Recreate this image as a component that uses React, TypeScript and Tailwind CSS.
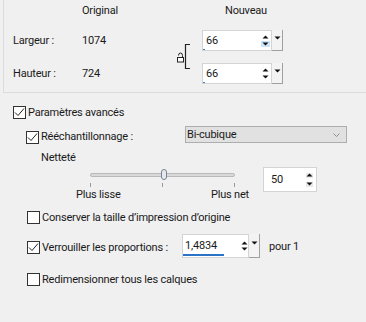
import React from "react";

function Check({ checked }: { checked: boolean }) {
  return (
    <div className="w-[13px] h-[13px] shrink-0 bg-white border border-[#333333] flex items-center justify-center">
      {checked && (
        <svg width="11" height="11" viewBox="0 0 11 11">
          <path d="M1 5.5 L4 8.5 L10 1.5" fill="none" stroke="#222" strokeWidth="1" />
        </svg>
      )}
    </div>
  );
}

function UpTri() {
  return (
    <svg width="7" height="4" viewBox="0 0 7 4">
      <path d="M0.5 3.5 L3.5 0.5 L6.5 3.5 Z" fill="#111" />
    </svg>
  );
}
function DownTri() {
  return (
    <svg width="7" height="4" viewBox="0 0 7 4">
      <path d="M0.5 0.5 L3.5 3.5 L6.5 0.5 Z" fill="#111" />
    </svg>
  );
}

function Spin({ value, hover }: { value: string; hover?: boolean }) {
  return (
    <div className="flex h-[21px] w-[81px]">
      <div className="relative flex flex-1 items-center bg-white border border-[#d4d4d4]">
        <span className="pl-[3px]">{value}</span>
        <div className="ml-auto mr-[1px] flex w-[9px] flex-col items-center gap-[1px]">
          <div className="flex h-[6px] w-[9px] items-center justify-center">
            <UpTri />
          </div>
          <div className={"flex h-[6px] w-[9px] items-center justify-center " + (hover ? "bg-[#cce4f7]" : "")}>
            <DownTri />
          </div>
        </div>
        <div className="absolute bottom-0 left-0 h-[1px] w-[2px] bg-[#3c7fd4]" />
      </div>
      <div className="flex w-[11px] justify-center bg-[#f3f3f3] border-r border-b border-[#a0a0a0] pt-[6px]">
        <DownTri />
      </div>
    </div>
  );
}

export default function App() {
  return (
    <div className="w-[366px] h-[322px] overflow-hidden whitespace-nowrap bg-[#f0f0f0] text-[11px] tracking-[-0.2px] leading-[16px] text-[#1a1a1a] font-['Roboto',sans-serif]">
      {/* Top box */}
      <div className="ml-[3px] h-[93px] border-l border-b border-[#dcdcdc]">
        <div className="flex pt-[3px]">
          <span className="ml-[78px] w-[143px]">Original</span>
          <span>Nouveau</span>
        </div>
        <div className="mt-[11px] grid grid-cols-[78px_95px_25px_81px] grid-rows-[21px_21px] gap-y-[12px]">
          <span className="pl-[9px] self-center">Largeur :</span>
          <span className="self-center">1074</span>
          <div className="row-span-2">
            <svg width="25" height="54" viewBox="0 0 25 54">
              <path d="M1.5 25.5 a2 2.5 0 0 1 4 0 v1.5" fill="none" stroke="#222" strokeWidth="1" />
              <rect x="0.5" y="27.5" width="6" height="4.5" fill="#fff" stroke="#222" strokeWidth="1" />
              <path d="M13 14.5 H8.5 V38.5 H13" fill="none" stroke="#222" strokeWidth="1.2" />
            </svg>
          </div>
          <Spin value="66" hover />
          <span className="pl-[9px] self-center">Hauteur :</span>
          <span className="self-center">724</span>
          <Spin value="66" />
        </div>
      </div>

      {/* Paramètres avancés */}
      <div className="mt-[13px] ml-[13px] flex h-[13px] items-center gap-[2px]">
        <Check checked />
        <span>Paramètres avancés</span>
      </div>

      {/* Rééchantillonnage */}
      <div className="mt-[7px] ml-[26px] flex h-[18px] items-start">
        <div className="mt-[5px]">
          <Check checked />
        </div>
        <span className="ml-[2px] mt-[3px] w-[144px]">Rééchantillonnage :</span>
        <div className="flex h-[17px] w-[162px] items-center bg-[#e1e1e1] border border-[#adadad] pl-[1px] pr-[6px]">
          <span>Bi-cubique</span>
          <svg className="ml-auto" width="7" height="4" viewBox="0 0 7 4">
            <path d="M0.5 0.5 L3.5 3.5 L6.5 0.5" fill="none" stroke="#888" strokeWidth="0.9" />
          </svg>
        </div>
      </div>

      {/* Netteté */}
      <div className="mt-[6px] ml-[41px]">Netteté</div>

      {/* Slider row */}
      <div className="mt-[1px] flex">
        <div className="ml-[76px] w-[173px] flex flex-col">
          <div className="relative h-[16px] mx-[14px] flex items-center">
            <div className="h-[4px] w-full rounded-[2px] bg-[#d9d9d9] border border-[#b8b8b8]" />
            <div className="absolute left-[71px] top-[2px] h-[11px] w-[6px] rounded-[3px] bg-[#e4e8f0] border border-[#7d8394]" />
          </div>
          <div className="mx-[14px] flex h-[4px] justify-between">
            <div className="w-[1px] h-[4px] bg-[#999]" />
            <div className="w-[1px] h-[4px] bg-[#999]" />
            <div className="w-[1px] h-[4px] bg-[#999]" />
          </div>
          <div className="mt-[1px] flex justify-between leading-[14px]">
            <span>Plus lisse</span>
            <span>Plus net</span>
          </div>
        </div>
        <div className="ml-[14px] flex h-[25px] w-[54px] items-center bg-white border border-[#d4d4d4]">
          <span className="pl-[7px]">50</span>
          <div className="ml-auto mr-[3px] flex flex-col gap-[4px]">
            <div className="flex h-[5px] w-[7px] items-center justify-center bg-[#e8e8e8]"><UpTri /></div>
            <div className="flex h-[5px] w-[7px] items-center justify-center bg-[#e8e8e8]"><DownTri /></div>
          </div>
        </div>
      </div>

      {/* Conserver */}
      <div className="mt-[9px] ml-[27px] flex h-[13px] items-center gap-[2px]">
        <Check checked={false} />
        <span>Conserver la taille d’impression d’origine</span>
      </div>

      {/* Verrouiller */}
      <div className="mt-[10px] ml-[27px] flex h-[24px] items-start">
        <div className="mt-[7px]">
          <Check checked />
        </div>
        <span className="ml-[2px] mt-[6px] w-[140px]">Verrouiller les proportions :</span>
        <div className="flex h-[24px] w-[78px]">
          <div className="relative flex flex-1 items-center bg-white border border-[#d4d4d4]">
            <span className="pl-[2px]">1,4834</span>
            <div className="ml-auto flex w-[8px] flex-col items-center gap-[2px]">
              <UpTri />
              <DownTri />
            </div>
            <div className="absolute bottom-[1px] left-0 h-[2px] w-[41px] bg-[#2a73c7]" />
          </div>
          <div className="flex w-[11px] justify-center bg-[#f3f3f3] border-r border-b border-[#a0a0a0] pt-[7px]">
            <DownTri />
          </div>
        </div>
        <span className="ml-[9px] mt-[5px]">pour 1</span>
      </div>

      {/* Redimensionner */}
      <div className="mt-[15px] ml-[27px] flex h-[13px] items-center gap-[2px]">
        <Check checked={false} />
        <span>Redimensionner tous les calques</span>
      </div>
    </div>
  );
}
